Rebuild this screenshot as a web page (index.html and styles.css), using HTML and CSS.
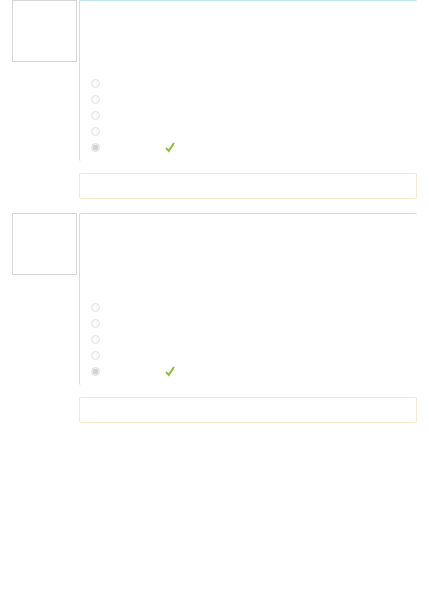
FILE: index.html
```html
<!DOCTYPE html>
<html lang="en">
<head>
    <meta charset="UTF-8">
    <meta name="viewport" content="width=device-width, initial-scale=1.0">
    <title>Quiz review</title>
    <link rel="stylesheet" href="styles.css">
</head>
<body>
    <div class="que">
        <div class="info">
            <span class="qno">Question 1</span>
        </div>
        <div class="content">
            <div class="formulation">
                <div class="qtext">
                    <p>Which of the following</p>
                    <p>values is the result</p>
                    <p>of the expression</p>
                    <p>shown above?</p>
                </div>
                <div class="prompt">Select one:</div>
                <div class="answer">
                    <div class="row"><span class="radio"></span><span class="label">a. 12</span></div>
                    <div class="row"><span class="radio"></span><span class="label">b. 24</span></div>
                    <div class="row"><span class="radio"></span><span class="label">c. 36</span></div>
                    <div class="row"><span class="radio"></span><span class="label">d. 48</span></div>
                    <div class="row correct">
                        <span class="radio checked"></span><span class="label">e. 60</span>
                        <svg class="tick" width="10" height="11" viewBox="0 0 10 11"><path d="M1 6 L3.8 9 L9 1" fill="none" stroke="#86c232" stroke-width="2"/></svg>
                    </div>
                </div>
            </div>
            <div class="feedback">The correct answer is: e. 60</div>
        </div>
    </div>

    <div class="que">
        <div class="info">
            <span class="qno">Question 2</span>
        </div>
        <div class="content">
            <div class="formulation">
                <div class="qtext">
                    <p>Pick the statement</p>
                    <p>that best describes</p>
                    <p>the behaviour of the</p>
                    <p>function when it is</p>
                    <p>called twice.</p>
                </div>
                <div class="prompt">Select one:</div>
                <div class="answer">
                    <div class="row"><span class="radio"></span><span class="label">a. Error</span></div>
                    <div class="row"><span class="radio"></span><span class="label">b. None</span></div>
                    <div class="row"><span class="radio"></span><span class="label">c. Once</span></div>
                    <div class="row"><span class="radio"></span><span class="label">d. Never</span></div>
                    <div class="row correct">
                        <span class="radio checked"></span><span class="label">e. Twice</span>
                        <svg class="tick" width="10" height="11" viewBox="0 0 10 11"><path d="M1 6 L3.8 9 L9 1" fill="none" stroke="#86c232" stroke-width="2"/></svg>
                    </div>
                </div>
            </div>
            <div class="feedback">The correct answer is: e. Twice</div>
        </div>
    </div>
</body>
</html>
```

FILE: styles.css
```css
* {
    margin: 0;
    padding: 0;
    box-sizing: border-box;
}

body {
    font-family: "Liberation Sans", Arial, sans-serif;
    font-size: 11px;
    color: #fff;
    background: #fff;
}

.que {
    display: flex;
    gap: 2px;
    padding: 0 12px 0 12px;
    margin-bottom: 14px;
}

.info {
    width: 65px;
    height: 62px;
    flex-shrink: 0;
    border: 1px solid #d6d6d6;
}

.qno {
    display: block;
    padding: 4px;
    color: #fff;
}

.content {
    flex: 1;
    display: flex;
    flex-direction: column;
    gap: 12px;
}

.formulation {
    border-top: 1px solid #bce5ef;
    border-left: 1px solid #bce5ef;
    border-radius: 2px 2px 0 2px;
    padding: 10px 0 6px 11px;
}

.qtext p {
    line-height: 11px;
}

.prompt {
    margin-top: 4px;
    line-height: 16px;
}

.row {
    display: flex;
    align-items: center;
    height: 16px;
}

.radio {
    width: 9px;
    height: 9px;
    border-radius: 50%;
    border: 1px solid #e4e4e4;
    background: #fafafa;
    margin-right: 6px;
}

.radio.checked {
    background: radial-gradient(circle, #d2d2d2 0 2.5px, #f0f0f0 3px);
    border-color: #e0e0e0;
}

.label {
    min-width: 57px;
    color: #fff;
    white-space: nowrap;
}

.tick {
    margin-left: 2px;
}

.feedback {
    height: 26px;
    border: 1px solid #f5e9cb;
    border-radius: 2px;
    padding: 6px 8px;
    color: #fff;
}
```
